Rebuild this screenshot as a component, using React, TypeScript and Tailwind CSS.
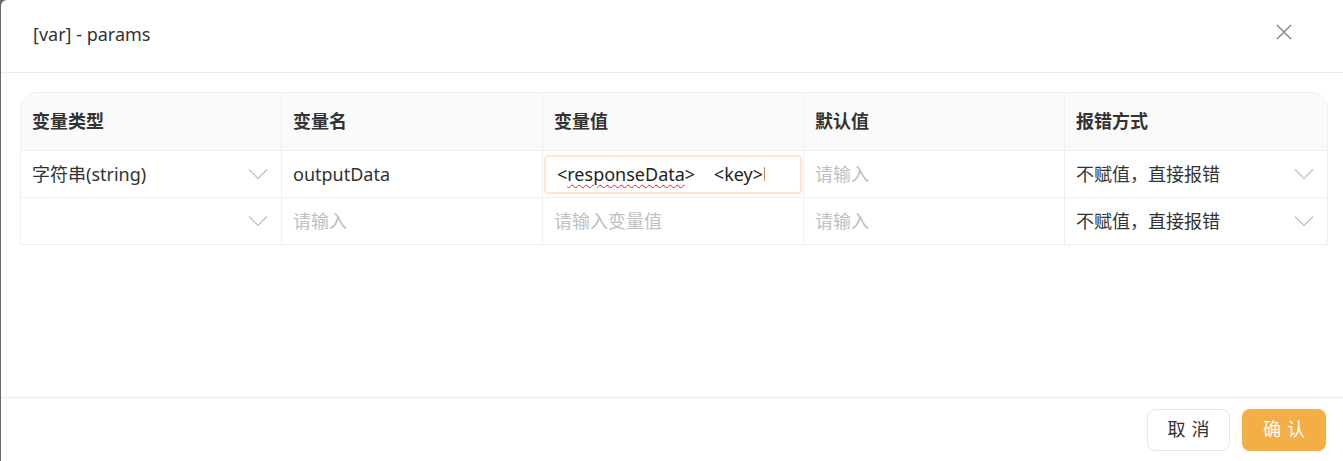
import React from 'react';

const font = "font-['Noto_Sans','Noto_Sans_CJK_SC',sans-serif]";

const Chevron: React.FC = () => (
    <svg width="20" height="12" viewBox="0 0 20 12" fill="none" className="shrink-0">
        <path d="M1 1.5 L10 10.5 L19 1.5" stroke="#bfbfbf" strokeWidth="1.2" />
    </svg>
);

const Cell: React.FC<{ children?: React.ReactNode; last?: boolean; className?: string }> = ({ children, last, className }) => (
    <div className={`h-full flex items-center px-3 ${last ? '' : 'border-r border-[#efefef]'} ${className ?? ''}`}>
        {children}
    </div>
);

const headers = ['变量类型', '变量名', '变量值', '默认值', '报错方式'];

const App: React.FC = () => {
    return (
        <div className={`w-[1343px] h-[461px] bg-[#6b6b6b] flex ${font}`}>
            <div className="ml-px flex-1 bg-white rounded-tl-[6px] flex flex-col">
                <div className="h-[73px] border-b border-[#ececec] flex items-center justify-between pl-[32px] pr-[50px]">
                    <span className="text-[18px] text-[#333] -mt-[3px]">[var] - params</span>
                    <svg width="18" height="18" viewBox="0 0 18 18" className="-mt-[9px]">
                        <path d="M2 2 L16 16 M16 2 L2 16" stroke="#8a8a8a" strokeWidth="1.5" />
                    </svg>
                </div>

                <div className="flex-1 pt-[19px] pl-[19px] pr-[15px]">
                    <div className="border border-[#efefef] rounded-t-[16px] overflow-hidden text-[18px]">
                        <div className="grid grid-cols-[261px_261px_261px_261px_1fr] h-[58px] bg-[#fafafa] border-b border-[#efefef]">
                            {headers.map((h, i) => (
                                <Cell key={h} last={i === 4} className="pl-[11px]">
                                    <span className="font-bold text-[#333]">{h}</span>
                                </Cell>
                            ))}
                        </div>
                        <div className="grid grid-cols-[261px_261px_261px_261px_1fr] h-[47px] border-b border-[#efefef]">
                            <Cell className="justify-between pl-[11px] pr-[13px]">
                                <span className="text-[#333]">字符串(string)</span>
                                <Chevron />
                            </Cell>
                            <Cell className="pl-[11px]">
                                <span className="text-[#333]">outputData</span>
                            </Cell>
                            <Cell className="px-[1px]">
                                <div className="w-full h-[39px] border-2 border-[#fde8cb] rounded-[4px] flex items-center pl-[11px]">
                                    <div className="w-[208px] overflow-hidden whitespace-nowrap text-[#222]">
                                        <span>&lt;</span>
                                        <span className="underline decoration-wavy decoration-[#e02020] decoration-1 underline-offset-[3px]">responseData</span>
                                        <span>&gt;&nbsp;&nbsp;&nbsp;&nbsp;&lt;key&gt;h</span>
                                    </div>
                                </div>
                            </Cell>
                            <Cell className="pl-[11px]">
                                <span className="text-[#bfbfbf]">请输入</span>
                            </Cell>
                            <Cell last className="justify-between pl-[11px] pr-[13px]">
                                <span className="text-[#333]">不赋值，直接报错</span>
                                <Chevron />
                            </Cell>
                        </div>
                        <div className="grid grid-cols-[261px_261px_261px_261px_1fr] h-[46px]">
                            <Cell className="justify-end pr-[13px]">
                                <Chevron />
                            </Cell>
                            <Cell className="pl-[11px]">
                                <span className="text-[#bfbfbf]">请输入</span>
                            </Cell>
                            <Cell className="pl-[11px]">
                                <span className="text-[#bfbfbf]">请输入变量值</span>
                            </Cell>
                            <Cell className="pl-[11px]">
                                <span className="text-[#bfbfbf]">请输入</span>
                            </Cell>
                            <Cell last className="justify-between pl-[11px] pr-[13px]">
                                <span className="text-[#333]">不赋值，直接报错</span>
                                <Chevron />
                            </Cell>
                        </div>
                    </div>
                </div>

                <div className="h-[64px] border-t border-[#ececec] flex items-center justify-end gap-[12px] pr-[17px]">
                    <button className="w-[83px] h-[42px] rounded-[8px] border border-[#e6e6e6] bg-white text-[18px] text-[#333] tracking-[6px] pl-[6px]">
                        取消
                    </button>
                    <button className="w-[84px] h-[42px] rounded-[8px] bg-[#f4ae46] text-[18px] text-white tracking-[6px] pl-[6px]">
                        确认
                    </button>
                </div>
            </div>
        </div>
    );
};

export default App;
